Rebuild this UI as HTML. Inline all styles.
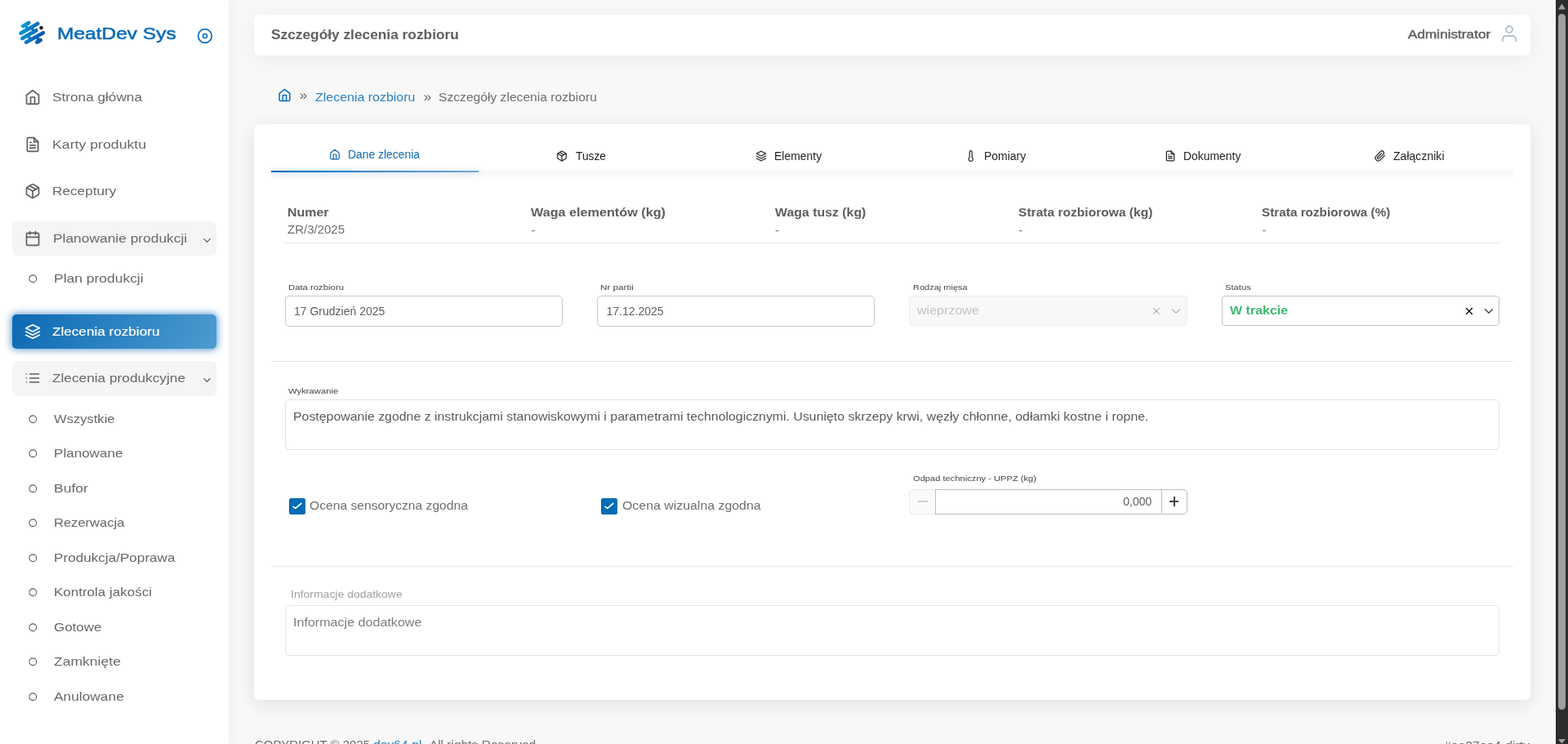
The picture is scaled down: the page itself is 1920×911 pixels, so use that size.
<!DOCTYPE html>
<html lang="pl"><head><meta charset="utf-8"><title>Szczegóły zlecenia rozbioru</title>
<style>
html,body{margin:0;padding:0}
body{width:1920px;height:911px;overflow:hidden;position:relative;background:#f8f8f8;font-family:"Liberation Sans",sans-serif;}
.t{position:absolute;white-space:nowrap;line-height:20px;display:block;transform-origin:0 50%;margin:0;padding:0;font-weight:400;text-decoration:none}
.i{position:absolute;display:block;overflow:visible}
.b{position:absolute;box-sizing:border-box}
a{text-decoration:none;color:inherit}
#w{position:absolute;left:0;top:0;width:1920px;height:911px;will-change:transform}
</style></head><body><div id="w">

<aside>
<div class="b" style="left:0px;top:0px;width:280px;height:911px;background:#fff;box-shadow:0 0 15px 0 rgba(0,0,0,.06);"></div>
<svg class="i" style="left:15px;top:20px" width="50" height="40" viewBox="15 20 50 40">
<defs><linearGradient id="lg" gradientUnits="userSpaceOnUse" x1="24" y1="36" x2="54" y2="48"><stop offset="0" stop-color="#0a9ddf"/><stop offset="1" stop-color="#054ea6"/></linearGradient></defs>
<g stroke="url(#lg)" stroke-width="4.65" stroke-linecap="round" fill="none">
<line x1="28.2" y1="31.9" x2="35.2" y2="27.9"/>
<line x1="25.5" y1="40.6" x2="46.2" y2="29.0"/>
<line x1="27.3" y1="47.0" x2="44.4" y2="37.3"/>
<line x1="32.1" y1="51.8" x2="52.8" y2="40.2"/>
<line x1="45.3" y1="51.6" x2="49.7" y2="49.2"/>
<line x1="31.32" y1="30.96" x2="33.28" y2="34.44" stroke-width="3.6" stroke-linecap="butt"/>
<line x1="39.02" y1="34.46" x2="40.98" y2="37.94" stroke-width="3.6" stroke-linecap="butt"/>
<line x1="34.62" y1="43.76" x2="36.58" y2="47.24" stroke-width="3.6" stroke-linecap="butt"/>
<line x1="45.22" y1="45.06" x2="47.18" y2="48.54" stroke-width="3.6" stroke-linecap="butt"/>
</g><circle cx="50.5" cy="34" r="2.3" fill="#111"/></svg>
<span class="t" style="left:70.00px;top:30.72px;font-size:21px;transform:scaleX(1.1662);color:#086bb7;-webkit-text-stroke:0.55px #086bb7;">MeatDev Sys</span>
<svg class="i" style="left:241.00px;top:34.00px;" width="20" height="20" viewBox="0 0 24 24" fill="none" stroke="#086bb7" stroke-width="2" stroke-linecap="round" stroke-linejoin="round"><circle cx="12" cy="12" r="10"/><circle cx="12" cy="12" r="3"/></svg>
<nav>
<svg class="i" style="left:30.00px;top:109.00px;" width="20" height="20" viewBox="0 0 24 24" fill="none" stroke="#5c5c5c" stroke-width="2" stroke-linecap="round" stroke-linejoin="round"><path d="M3 9l9-7 9 7v11a2 2 0 0 1-2 2H5a2 2 0 0 1-2-2z"/><polyline points="9 22 9 12 15 12 15 22"/></svg>
<a href="#" class="t" style="left:64.20px;top:108.66px;font-size:15.4px;transform:scaleX(1.1180);color:#686868;">Strona główna</a>
<svg class="i" style="left:30.00px;top:167.00px;" width="20" height="20" viewBox="0 0 24 24" fill="none" stroke="#5c5c5c" stroke-width="2" stroke-linecap="round" stroke-linejoin="round"><path d="M14 2H6a2 2 0 0 0-2 2v16a2 2 0 0 0 2 2h12a2 2 0 0 0 2-2V8z"/><polyline points="14 2 14 8 20 8"/><line x1="16" y1="13" x2="8" y2="13"/><line x1="16" y1="17" x2="8" y2="17"/><polyline points="10 9 9 9 8 9"/></svg>
<a href="#" class="t" style="left:64.20px;top:166.66px;font-size:15.4px;transform:scaleX(1.1500);color:#686868;">Karty produktu</a>
<svg class="i" style="left:30.00px;top:224.00px;" width="20" height="20" viewBox="0 0 24 24" fill="none" stroke="#5c5c5c" stroke-width="2" stroke-linecap="round" stroke-linejoin="round"><line x1="16.5" y1="9.4" x2="7.5" y2="4.21"/><path d="M21 16V8a2 2 0 0 0-1-1.73l-7-4a2 2 0 0 0-2 0l-7 4A2 2 0 0 0 3 8v8a2 2 0 0 0 1 1.73l7 4a2 2 0 0 0 2 0l7-4A2 2 0 0 0 21 16z"/><polyline points="3.27 6.96 12 12.01 20.73 6.96"/><line x1="12" y1="22.08" x2="12" y2="12"/></svg>
<a href="#" class="t" style="left:64.20px;top:223.66px;font-size:15.4px;transform:scaleX(1.1179);color:#686868;">Receptury</a>
<div class="b" style="left:15px;top:271px;width:250px;height:42px;background:#f5f5f5;border-radius:6px;"></div>
<svg class="i" style="left:30.00px;top:282.00px;" width="20" height="20" viewBox="0 0 24 24" fill="none" stroke="#5c5c5c" stroke-width="2" stroke-linecap="round" stroke-linejoin="round"><rect x="3" y="4" width="18" height="18" rx="2" ry="2"/><line x1="16" y1="2" x2="16" y2="6"/><line x1="8" y1="2" x2="8" y2="6"/><line x1="3" y1="10" x2="21" y2="10"/></svg>
<a href="#" class="t" style="left:64.60px;top:281.66px;font-size:15.4px;transform:scaleX(1.1290);color:#686868;">Planowanie produkcji</a>
<svg class="i" style="left:245.50px;top:286.80px;" width="15" height="15" viewBox="0 0 24 24" fill="none" stroke="#5c5c5c" stroke-width="2.2" stroke-linecap="round" stroke-linejoin="round"><polyline points="6 9 12 15 18 9"/></svg>
<svg class="i" style="left:34.95px;top:335.95px;" width="10.5" height="10.5" viewBox="0 0 24 24" fill="none" stroke="#5c5c5c" stroke-width="2.4" stroke-linecap="round" stroke-linejoin="round"><circle cx="12" cy="12" r="10"/></svg>
<a href="#" class="t" style="left:65.80px;top:331.08px;font-size:14.2px;transform:scaleX(1.2302);color:#686868;">Plan produkcji</a>
<div class="b" style="left:15px;top:385px;width:250px;height:42px;background:linear-gradient(118deg,#0c69b3,#4d9bd0);border-radius:5px;box-shadow:0 0 10px 1px rgba(14,107,184,.7);"></div>
<svg class="i" style="left:30.00px;top:396.00px;" width="20" height="20" viewBox="0 0 24 24" fill="none" stroke="#fff" stroke-width="2" stroke-linecap="round" stroke-linejoin="round"><polygon points="12 2 2 7 12 12 22 7 12 2"/><polyline points="2 17 12 22 22 17"/><polyline points="2 12 12 17 22 12"/></svg>
<a href="#" class="t" style="left:64.20px;top:395.66px;font-size:15.4px;transform:scaleX(1.1133);color:#fff;-webkit-text-stroke:0.15px #fff;">Zlecenia rozbioru</a>
<div class="b" style="left:15px;top:442px;width:250px;height:43px;background:#f5f5f5;border-radius:6px;"></div>
<svg class="i" style="left:30.00px;top:453.00px;" width="20" height="20" viewBox="0 0 24 24" fill="none" stroke="#5c5c5c" stroke-width="2" stroke-linecap="round" stroke-linejoin="round"><line x1="8" y1="6" x2="21" y2="6"/><line x1="8" y1="12" x2="21" y2="12"/><line x1="8" y1="18" x2="21" y2="18"/><line x1="3" y1="6" x2="3.01" y2="6"/><line x1="3" y1="12" x2="3.01" y2="12"/><line x1="3" y1="18" x2="3.01" y2="18"/></svg>
<a href="#" class="t" style="left:64.20px;top:452.66px;font-size:15.4px;transform:scaleX(1.1207);color:#686868;">Zlecenia produkcyjne</a>
<svg class="i" style="left:245.50px;top:457.50px;" width="15" height="15" viewBox="0 0 24 24" fill="none" stroke="#5c5c5c" stroke-width="2.2" stroke-linecap="round" stroke-linejoin="round"><polyline points="6 9 12 15 18 9"/></svg>
<svg class="i" style="left:34.95px;top:507.95px;" width="10.5" height="10.5" viewBox="0 0 24 24" fill="none" stroke="#5c5c5c" stroke-width="2.4" stroke-linecap="round" stroke-linejoin="round"><circle cx="12" cy="12" r="10"/></svg>
<a href="#" class="t" style="left:65.70px;top:503.08px;font-size:14.2px;transform:scaleX(1.1674);color:#686868;">Wszystkie</a>
<svg class="i" style="left:34.95px;top:549.95px;" width="10.5" height="10.5" viewBox="0 0 24 24" fill="none" stroke="#5c5c5c" stroke-width="2.4" stroke-linecap="round" stroke-linejoin="round"><circle cx="12" cy="12" r="10"/></svg>
<a href="#" class="t" style="left:65.70px;top:545.08px;font-size:14.2px;transform:scaleX(1.2022);color:#686868;">Planowane</a>
<svg class="i" style="left:34.95px;top:592.95px;" width="10.5" height="10.5" viewBox="0 0 24 24" fill="none" stroke="#5c5c5c" stroke-width="2.4" stroke-linecap="round" stroke-linejoin="round"><circle cx="12" cy="12" r="10"/></svg>
<a href="#" class="t" style="left:65.70px;top:588.08px;font-size:14.2px;transform:scaleX(1.2376);color:#686868;">Bufor</a>
<svg class="i" style="left:34.95px;top:634.95px;" width="10.5" height="10.5" viewBox="0 0 24 24" fill="none" stroke="#5c5c5c" stroke-width="2.4" stroke-linecap="round" stroke-linejoin="round"><circle cx="12" cy="12" r="10"/></svg>
<a href="#" class="t" style="left:65.70px;top:630.08px;font-size:14.2px;transform:scaleX(1.1647);color:#686868;">Rezerwacja</a>
<svg class="i" style="left:34.95px;top:677.95px;" width="10.5" height="10.5" viewBox="0 0 24 24" fill="none" stroke="#5c5c5c" stroke-width="2.4" stroke-linecap="round" stroke-linejoin="round"><circle cx="12" cy="12" r="10"/></svg>
<a href="#" class="t" style="left:65.70px;top:673.08px;font-size:14.2px;transform:scaleX(1.2071);color:#686868;">Produkcja/Poprawa</a>
<svg class="i" style="left:34.95px;top:719.95px;" width="10.5" height="10.5" viewBox="0 0 24 24" fill="none" stroke="#5c5c5c" stroke-width="2.4" stroke-linecap="round" stroke-linejoin="round"><circle cx="12" cy="12" r="10"/></svg>
<a href="#" class="t" style="left:65.70px;top:715.08px;font-size:14.2px;transform:scaleX(1.1980);color:#686868;">Kontrola jakości</a>
<svg class="i" style="left:34.95px;top:762.95px;" width="10.5" height="10.5" viewBox="0 0 24 24" fill="none" stroke="#5c5c5c" stroke-width="2.4" stroke-linecap="round" stroke-linejoin="round"><circle cx="12" cy="12" r="10"/></svg>
<a href="#" class="t" style="left:65.70px;top:758.08px;font-size:14.2px;transform:scaleX(1.1938);color:#686868;">Gotowe</a>
<svg class="i" style="left:34.95px;top:804.95px;" width="10.5" height="10.5" viewBox="0 0 24 24" fill="none" stroke="#5c5c5c" stroke-width="2.4" stroke-linecap="round" stroke-linejoin="round"><circle cx="12" cy="12" r="10"/></svg>
<a href="#" class="t" style="left:65.70px;top:800.08px;font-size:14.2px;transform:scaleX(1.2365);color:#686868;">Zamknięte</a>
<svg class="i" style="left:34.95px;top:847.95px;" width="10.5" height="10.5" viewBox="0 0 24 24" fill="none" stroke="#5c5c5c" stroke-width="2.4" stroke-linecap="round" stroke-linejoin="round"><circle cx="12" cy="12" r="10"/></svg>
<a href="#" class="t" style="left:65.70px;top:843.08px;font-size:14.2px;transform:scaleX(1.2221);color:#686868;">Anulowane</a>
</nav></aside>
<header>
<div class="b" style="left:311px;top:18px;width:1563px;height:50px;background:#fff;border-radius:7px;box-shadow:0 4px 24px 0 rgba(0,0,0,.055);"></div>
<h2 class="t" style="left:332.20px;top:33.46px;font-size:16px;transform:scaleX(1.0815);color:#5e5e5e;font-weight:700;">Szczegóły zlecenia rozbioru</h2>
<span class="t" style="left:1723.75px;top:32.08px;font-size:14.2px;transform:scaleX(1.2106);color:#626262;-webkit-text-stroke:0.45px #626262;">Administrator</span>
<svg class="i" style="left:1835.90px;top:29.10px;" width="24" height="24" viewBox="0 0 24 24" fill="none" stroke="#b4c1d0" stroke-width="2" stroke-linecap="round" stroke-linejoin="round"><path d="M20 21v-2a4 4 0 0 0-4-4H8a4 4 0 0 0-4 4v2"/><circle cx="12" cy="7" r="4"/></svg>
</header>
<div>
<svg class="i" style="left:339.90px;top:108.20px;" width="17" height="17" viewBox="0 0 24 24" fill="none" stroke="#086bb7" stroke-width="2.1" stroke-linecap="round" stroke-linejoin="round"><path d="M3 9l9-7 9 7v11a2 2 0 0 1-2 2H5a2 2 0 0 1-2-2z"/><polyline points="9 22 9 12 15 12 15 22"/></svg>
<span class="t" style="left:366.80px;top:106.71px;font-size:17px;color:#666;">»</span>
<a href="#" class="t" style="left:385.50px;top:109.08px;font-size:14.2px;transform:scaleX(1.1247);color:#2a82c4;">Zlecenia rozbioru</a>
<span class="t" style="left:518.80px;top:109.11px;font-size:17px;color:#666;">»</span>
<span class="t" style="left:536.75px;top:109.08px;font-size:14.2px;transform:scaleX(1.1022);color:#6e6e6e;">Szczegóły zlecenia rozbioru</span>
</div>
<main>
<div class="b" style="left:311px;top:152px;width:1563px;height:705px;background:#fff;border-radius:7px;box-shadow:0 4px 24px 0 rgba(0,0,0,.10);"></div>
<div class="b" style="left:332px;top:209px;width:1521px;height:13px;background:linear-gradient(#f6f6f7,#fff);"></div>
<div class="b" style="left:332px;top:208.5px;width:254px;height:2.75px;background:linear-gradient(30deg,#0e6bb8,rgba(14,107,184,.55));box-shadow:0 0 7px 0 rgba(14,107,184,.35);"></div>
<svg class="i" style="left:402.50px;top:181.55px;" width="14" height="14" viewBox="0 0 24 24" fill="none" stroke="#0e6bb8" stroke-width="2" stroke-linecap="round" stroke-linejoin="round"><path d="M3 9l9-7 9 7v11a2 2 0 0 1-2 2H5a2 2 0 0 1-2-2z"/><polyline points="9 22 9 12 15 12 15 22"/></svg>
<a href="#" class="t" style="left:426.00px;top:178.90px;font-size:14px;transform:scaleX(0.9914);color:#0e6bb8;">Dane zlecenia</a>
<svg class="i" style="left:681.40px;top:183.55px;" width="14" height="14" viewBox="0 0 24 24" fill="none" stroke="#1f1f1f" stroke-width="2" stroke-linecap="round" stroke-linejoin="round"><line x1="16.5" y1="9.4" x2="7.5" y2="4.21"/><path d="M21 16V8a2 2 0 0 0-1-1.73l-7-4a2 2 0 0 0-2 0l-7 4A2 2 0 0 0 3 8v8a2 2 0 0 0 1 1.73l7 4a2 2 0 0 0 2 0l7-4A2 2 0 0 0 21 16z"/><polyline points="3.27 6.96 12 12.01 20.73 6.96"/><line x1="12" y1="22.08" x2="12" y2="12"/></svg>
<a href="#" class="t" style="left:705.00px;top:180.90px;font-size:14px;transform:scaleX(0.9843);color:#1f1f1f;">Tusze</a>
<svg class="i" style="left:924.80px;top:183.55px;" width="14" height="14" viewBox="0 0 24 24" fill="none" stroke="#1f1f1f" stroke-width="2" stroke-linecap="round" stroke-linejoin="round"><polygon points="12 2 2 7 12 12 22 7 12 2"/><polyline points="2 17 12 22 22 17"/><polyline points="2 12 12 17 22 12"/></svg>
<a href="#" class="t" style="left:948.00px;top:180.90px;font-size:14px;transform:scaleX(0.9978);color:#1f1f1f;">Elementy</a>
<svg class="i" style="left:1181.60px;top:183.55px;" width="14" height="14" viewBox="0 0 24 24" fill="none" stroke="#1f1f1f" stroke-width="2" stroke-linecap="round" stroke-linejoin="round"><path d="M14 14.76V3.5a2.5 2.5 0 0 0-5 0v11.26a4.5 4.5 0 1 0 5 0z"/></svg>
<a href="#" class="t" style="left:1205.00px;top:180.90px;font-size:14px;transform:scaleX(0.9975);color:#1f1f1f;">Pomiary</a>
<svg class="i" style="left:1425.60px;top:183.55px;" width="14" height="14" viewBox="0 0 24 24" fill="none" stroke="#1f1f1f" stroke-width="2" stroke-linecap="round" stroke-linejoin="round"><path d="M14 2H6a2 2 0 0 0-2 2v16a2 2 0 0 0 2 2h12a2 2 0 0 0 2-2V8z"/><polyline points="14 2 14 8 20 8"/><line x1="16" y1="13" x2="8" y2="13"/><line x1="16" y1="17" x2="8" y2="17"/><polyline points="10 9 9 9 8 9"/></svg>
<a href="#" class="t" style="left:1449.20px;top:180.90px;font-size:14px;transform:scaleX(0.9938);color:#1f1f1f;">Dokumenty</a>
<svg class="i" style="left:1683.00px;top:183.55px;" width="14" height="14" viewBox="0 0 24 24" fill="none" stroke="#1f1f1f" stroke-width="2" stroke-linecap="round" stroke-linejoin="round"><path d="M21.44 11.05l-9.19 9.19a6 6 0 0 1-8.49-8.49l9.19-9.19a4 4 0 0 1 5.66 5.66l-9.2 9.19a2 2 0 0 1-2.83-2.83l8.49-8.48"/></svg>
<a href="#" class="t" style="left:1706.25px;top:180.90px;font-size:14px;transform:scaleX(1.0043);color:#1f1f1f;">Załączniki</a>
<span class="t" style="left:352.00px;top:250.01px;font-size:14.4px;transform:scaleX(1.1063);color:#5e5e5e;font-weight:700;">Numer</span>
<span class="t" style="left:650.00px;top:250.01px;font-size:14.4px;transform:scaleX(1.1250);color:#5e5e5e;font-weight:700;">Waga elementów (kg)</span>
<span class="t" style="left:948.50px;top:250.01px;font-size:14.4px;transform:scaleX(1.1030);color:#5e5e5e;font-weight:700;">Waga tusz (kg)</span>
<span class="t" style="left:1246.75px;top:250.01px;font-size:14.4px;transform:scaleX(1.0823);color:#5e5e5e;font-weight:700;">Strata rozbiorowa (kg)</span>
<span class="t" style="left:1545.00px;top:250.01px;font-size:14.4px;transform:scaleX(1.0640);color:#5e5e5e;font-weight:700;">Strata rozbiorowa (%)</span>
<span class="t" style="left:352.00px;top:271.05px;font-size:14.3px;transform:scaleX(1.0482);color:#6e6e6e;">ZR/3/2025</span>
<span class="t" style="left:650.40px;top:271.80px;font-size:15px;color:#7a7a7a;">-</span>
<span class="t" style="left:948.90px;top:271.80px;font-size:15px;color:#7a7a7a;">-</span>
<span class="t" style="left:1247.20px;top:271.80px;font-size:15px;color:#7a7a7a;">-</span>
<span class="t" style="left:1545.40px;top:271.80px;font-size:15px;color:#7a7a7a;">-</span>
<div class="b" style="left:347px;top:297px;width:1491px;height:1px;background:#ebebeb;"></div>
<label class="t" style="left:353.25px;top:341.78px;font-size:9.3px;transform:scaleX(1.2176);color:#444;">Data rozbioru</label>
<label class="t" style="left:735.40px;top:341.78px;font-size:9.3px;transform:scaleX(1.2550);color:#444;">Nr partii</label>
<label class="t" style="left:1117.50px;top:341.78px;font-size:9.3px;transform:scaleX(1.1844);color:#444;">Rodzaj mięsa</label>
<label class="t" style="left:1499.50px;top:341.78px;font-size:9.3px;transform:scaleX(1.2042);color:#444;">Status</label>
<div class="b" style="left:349px;top:362px;width:340px;height:38px;background:#fff;border:1px solid #c9c9c9;border-radius:5px;"></div>
<span class="t" style="left:360.00px;top:371.15px;font-size:14px;color:#5e5e5e;">17 Grudzień 2025</span>
<div class="b" style="left:731px;top:362px;width:340px;height:38px;background:#fff;border:1px solid #c9c9c9;border-radius:5px;"></div>
<span class="t" style="left:742.50px;top:371.15px;font-size:14px;color:#5e5e5e;">17.12.2025</span>
<div class="b" style="left:1113px;top:362px;width:341px;height:37px;background:#f8f8f8;border:1px solid #efefef;border-radius:4px;"></div>
<span class="t" style="left:1123.33px;top:370.05px;font-size:14.3px;transform:scaleX(1.1236);color:#c4c4c4;">wieprzowe</span>
<svg class="i" style="left:1408.60px;top:373.70px;" width="14" height="14" viewBox="0 0 24 24" fill="none" stroke="#969696" stroke-width="1.7" stroke-linecap="round" stroke-linejoin="round"><line x1="18" y1="6" x2="6" y2="18"/><line x1="6" y1="6" x2="18" y2="18"/></svg>
<svg class="i" style="left:1430.50px;top:372.00px;" width="18" height="18" viewBox="0 0 24 24" fill="none" stroke="#b4b4b4" stroke-width="1.55" stroke-linecap="round" stroke-linejoin="round"><polyline points="6 9 12 15 18 9"/></svg>
<div class="b" style="left:1496px;top:362px;width:340px;height:37px;background:#fff;border:1px solid #c2c2c2;border-radius:4px;"></div>
<span class="t" style="left:1505.50px;top:370.01px;font-size:14.4px;transform:scaleX(1.1131);color:#3fb970;font-weight:700;">W trakcie</span>
<svg class="i" style="left:1791.50px;top:373.70px;" width="14" height="14" viewBox="0 0 24 24" fill="none" stroke="#111" stroke-width="2.4" stroke-linecap="round" stroke-linejoin="round"><line x1="18" y1="6" x2="6" y2="18"/><line x1="6" y1="6" x2="18" y2="18"/></svg>
<svg class="i" style="left:1813.50px;top:372.00px;" width="18" height="18" viewBox="0 0 24 24" fill="none" stroke="#444" stroke-width="1.8" stroke-linecap="round" stroke-linejoin="round"><polyline points="6 9 12 15 18 9"/></svg>
<div class="b" style="left:332px;top:442px;width:1521px;height:1px;background:#e5e5e5;"></div>
<label class="t" style="left:353.25px;top:469.18px;font-size:9.3px;transform:scaleX(1.2118);color:#444;">Wykrawanie</label>
<div class="b" style="left:349px;top:489px;width:1487px;height:62px;background:#fff;border:1px solid #e3e3e6;border-radius:5px;"></div>
<span class="t" style="left:359.25px;top:500.05px;font-size:14.3px;transform:scaleX(1.1106);color:#5a5a5a;">Postępowanie zgodne z instrukcjami stanowiskowymi i parametrami technologicznymi. Usunięto skrzepy krwi, węzły chłonne, odłamki kostne i ropne.</span>
<div class="b" style="left:354px;top:610px;width:20px;height:20px;background:#026cb7;border-radius:2.5px;"></div>
<svg class="i" style="left:354px;top:610px" width="20" height="20" viewBox="0 0 20 20"><polyline points="4.5,10.1 7.9,12.4 15.3,6.0" fill="none" stroke="#fff" stroke-width="1.7"/></svg>
<span class="t" style="left:379.00px;top:608.80px;font-size:14.3px;transform:scaleX(1.0941);color:#6e6e6e;">Ocena sensoryczna zgodna</span>
<div class="b" style="left:736px;top:610px;width:20px;height:20px;background:#026cb7;border-radius:2.5px;"></div>
<svg class="i" style="left:736px;top:610px" width="20" height="20" viewBox="0 0 20 20"><polyline points="4.5,10.1 7.9,12.4 15.3,6.0" fill="none" stroke="#fff" stroke-width="1.7"/></svg>
<span class="t" style="left:761.50px;top:609.30px;font-size:14.3px;transform:scaleX(1.1115);color:#6e6e6e;">Ocena wizualna zgodna</span>
<label class="t" style="left:1117.70px;top:576.38px;font-size:9.3px;transform:scaleX(1.1978);color:#444;">Odpad techniczny - UPPZ (kg)</label>
<div class="b" style="left:1113px;top:598.5px;width:33px;height:31px;background:#fafafa;border:1px solid #e9e9e9;border-radius:5px 0 0 5px;"></div>
<div class="b" style="left:1124px;top:613.3px;width:11.5px;height:1.6px;background:#cfcfcf;"></div>
<div class="b" style="left:1144.7px;top:598.5px;width:278px;height:31px;background:#fff;border:1px solid #bdbdbd;"></div>
<span class="t" style="left:1375.33px;top:604.15px;font-size:14px;color:#5e5e5e;">0,000</span>
<div class="b" style="left:1422.4px;top:598.5px;width:31.3px;height:31px;background:#fff;border:1px solid #bdbdbd;border-radius:0 5px 5px 0;"></div>
<div class="b" style="left:1431.9px;top:613.2px;width:11.6px;height:2px;background:#444;"></div>
<div class="b" style="left:1436.7px;top:608.4px;width:2px;height:11.6px;background:#444;"></div>
<div class="b" style="left:332px;top:693px;width:1521px;height:1px;background:#e5e5e5;"></div>
<label class="t" style="left:355.75px;top:717.59px;font-size:12px;transform:scaleX(1.1646);color:#a3a3a3;">Informacje dodatkowe</label>
<div class="b" style="left:349px;top:741px;width:1487px;height:62px;background:#fff;border:1px solid #e6e6e9;border-radius:5px;"></div>
<span class="t" style="left:359.25px;top:752.05px;font-size:14.3px;transform:scaleX(1.1256);color:#7d7d7d;">Informacje dodatkowe</span>
</main>
<footer>
<span class="t" style="left:311.50px;top:901.55px;font-size:14.3px;transform:scaleX(1.0440);color:#6e6e6e;">COPYRIGHT © 2025</span>
<a href="#" class="t" style="left:457.30px;top:901.55px;font-size:14.3px;transform:scaleX(1.0989);color:#2a82c4;">dev64.pl</a>
<span class="t" style="left:518.00px;top:901.55px;font-size:14.3px;transform:scaleX(1.0869);color:#6e6e6e;">, All rights Reserved</span>
<span class="t" style="left:1768.00px;top:902.55px;font-size:14.3px;transform:scaleX(1.1008);color:#6e6e6e;">#ea27ee4-dirty</span>
</footer>
<div class="b" style="left:1905px;top:0px;width:15px;height:911px;background:#2c2c2c;"></div>
<div class="b" style="left:1908px;top:17px;width:9px;height:851.5px;background:#9f9f9f;border-radius:4.5px;"></div>
<svg class="i" style="left:1905px;top:0" width="15" height="911" viewBox="0 0 15 911"><polygon points="3,11.5 12,11.5 7.5,4.5" fill="#9f9f9f"/><polygon points="3,905 12,905 7.5,910.6" fill="#9f9f9f"/></svg>
</div></body></html>
